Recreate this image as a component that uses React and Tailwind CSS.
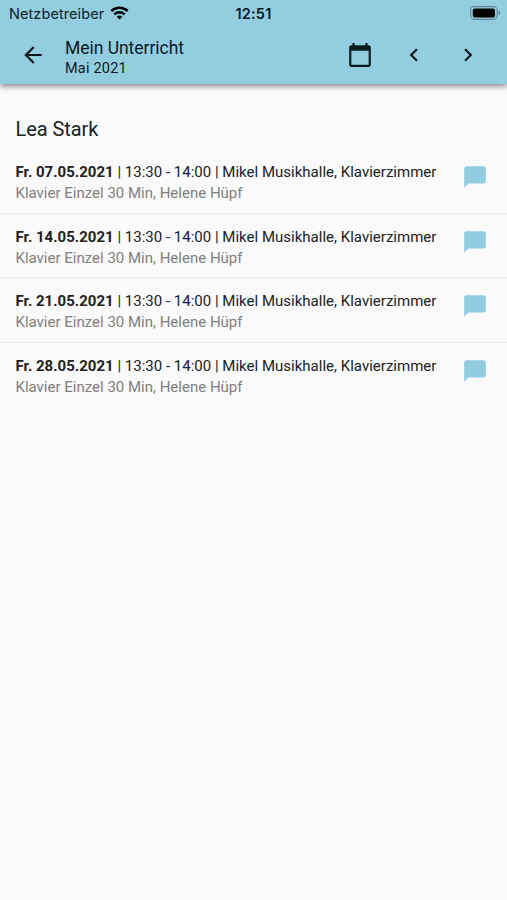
import React from "react";
import {
  MdArrowBack,
  MdCalendarToday,
  MdChatBubble,
  MdKeyboardArrowLeft,
  MdKeyboardArrowRight,
} from "react-icons/md";

const lessons = [
  { id: 1, date: "Fr. 07.05.2021" },
  { id: 2, date: "Fr. 14.05.2021" },
  { id: 3, date: "Fr. 21.05.2021" },
  { id: 4, date: "Fr. 28.05.2021" },
];

const StatusBar = () => (
  <div className="grid grid-cols-3 items-center h-[27px] pl-[9px] pr-[6px] font-[Inter,sans-serif] text-black">
    <div className="flex items-center gap-[6px]">
      <span className="text-[14.5px] leading-5 tracking-[0.08px] text-[#10222a]">
        Netzbetreiber
      </span>
      <svg className="-mt-[2px]" width="19" height="14" viewBox="0 0 19 14" fill="none">
        <path d="M1.3 5a12 12 0 0 1 16.4 0" stroke="currentColor" strokeWidth="2.6" />
        <path d="M4.3 8.4a7.5 7.5 0 0 1 10.4 0" stroke="currentColor" strokeWidth="2.4" />
        <path d="M9.5 13.6 6.7 10.8a4 4 0 0 1 5.6 0z" fill="currentColor" />
      </svg>
    </div>
    <span className="pr-[3px] text-center text-[14.5px] leading-5 font-semibold tracking-[0.2px] text-[#08181f]">
      12:51
    </span>
    <svg className="justify-self-end -mt-px" width="31" height="14" viewBox="0 0 31 14">
      <rect x="0.6" y="0.6" width="26.6" height="12.8" rx="3.8" fill="none" stroke="#5f8895" strokeWidth="1.1" />
      <rect x="2.8" y="2.6" width="22.2" height="8.8" rx="2" fill="#000" />
      <path d="M28.6 4.8c1.1.5 1.6 1.3 1.6 2.2s-.5 1.7-1.6 2.2z" fill="#5f8895" />
    </svg>
  </div>
);

const Toolbar = () => (
  <div className="flex items-center h-[55px] pl-5 pr-[26px] text-[#0c1a1f]">
    <button aria-label="Zurück">
      <MdArrowBack size={26} />
    </button>
    <div className="flex-1 ml-[19px] pt-[7px]">
      <h1 className="text-[17.5px] leading-[21px] tracking-[-0.03px]">Mein Unterricht</h1>
      <p className="text-[14.5px] leading-[19px] tracking-[0.2px]">Mai 2021</p>
    </div>
    <div className="flex items-center gap-7">
      <button aria-label="Kalender">
        <MdCalendarToday size={26} />
      </button>
      <button aria-label="Vorheriger Monat">
        <MdKeyboardArrowLeft size={26} />
      </button>
      <button aria-label="Nächster Monat">
        <MdKeyboardArrowRight size={26} />
      </button>
    </div>
  </div>
);

const LessonRow = ({ date }) => (
  <li className="flex items-start justify-between h-[64.7px] pt-[13px] pl-[15.5px] pr-[19px] border-b border-[#ebebeb] last:border-b-0">
    <div>
      <p className="text-[15px] leading-[21px] tracking-[0.01px] text-[#212121] whitespace-nowrap">
        <b className="font-bold">{date}</b> | 13:30 - 14:00 | Mikel Musikhalle, Klavierzimmer
      </p>
      <p className="text-[15px] leading-[21px] text-[#808080]">
        Klavier Einzel 30 Min, Helene Hüpf
      </p>
    </div>
    <button aria-label="Kommentar" className="mt-[2px] text-[#92cce0]">
      <MdChatBubble size={26} />
    </button>
  </li>
);

const App = () => {
  return (
    <div className="h-screen overflow-hidden bg-[#fafafa] font-[Roboto,sans-serif]">
      <header className="h-[84px] bg-[#93cde0] shadow-[0_2px_6px_rgba(0,0,0,0.5)]">
        <StatusBar />
        <Toolbar />
      </header>
      <main>
        <h2 className="pt-8 pl-[15.5px] text-[20px] leading-[26px] tracking-[-0.08px] text-[#212121]">
          Lea Stark
        </h2>
        <ul className="mt-[7px]">
          {lessons.map((lesson) => (
            <LessonRow key={lesson.id} date={lesson.date} />
          ))}
        </ul>
      </main>
    </div>
  );
};

export default App;
